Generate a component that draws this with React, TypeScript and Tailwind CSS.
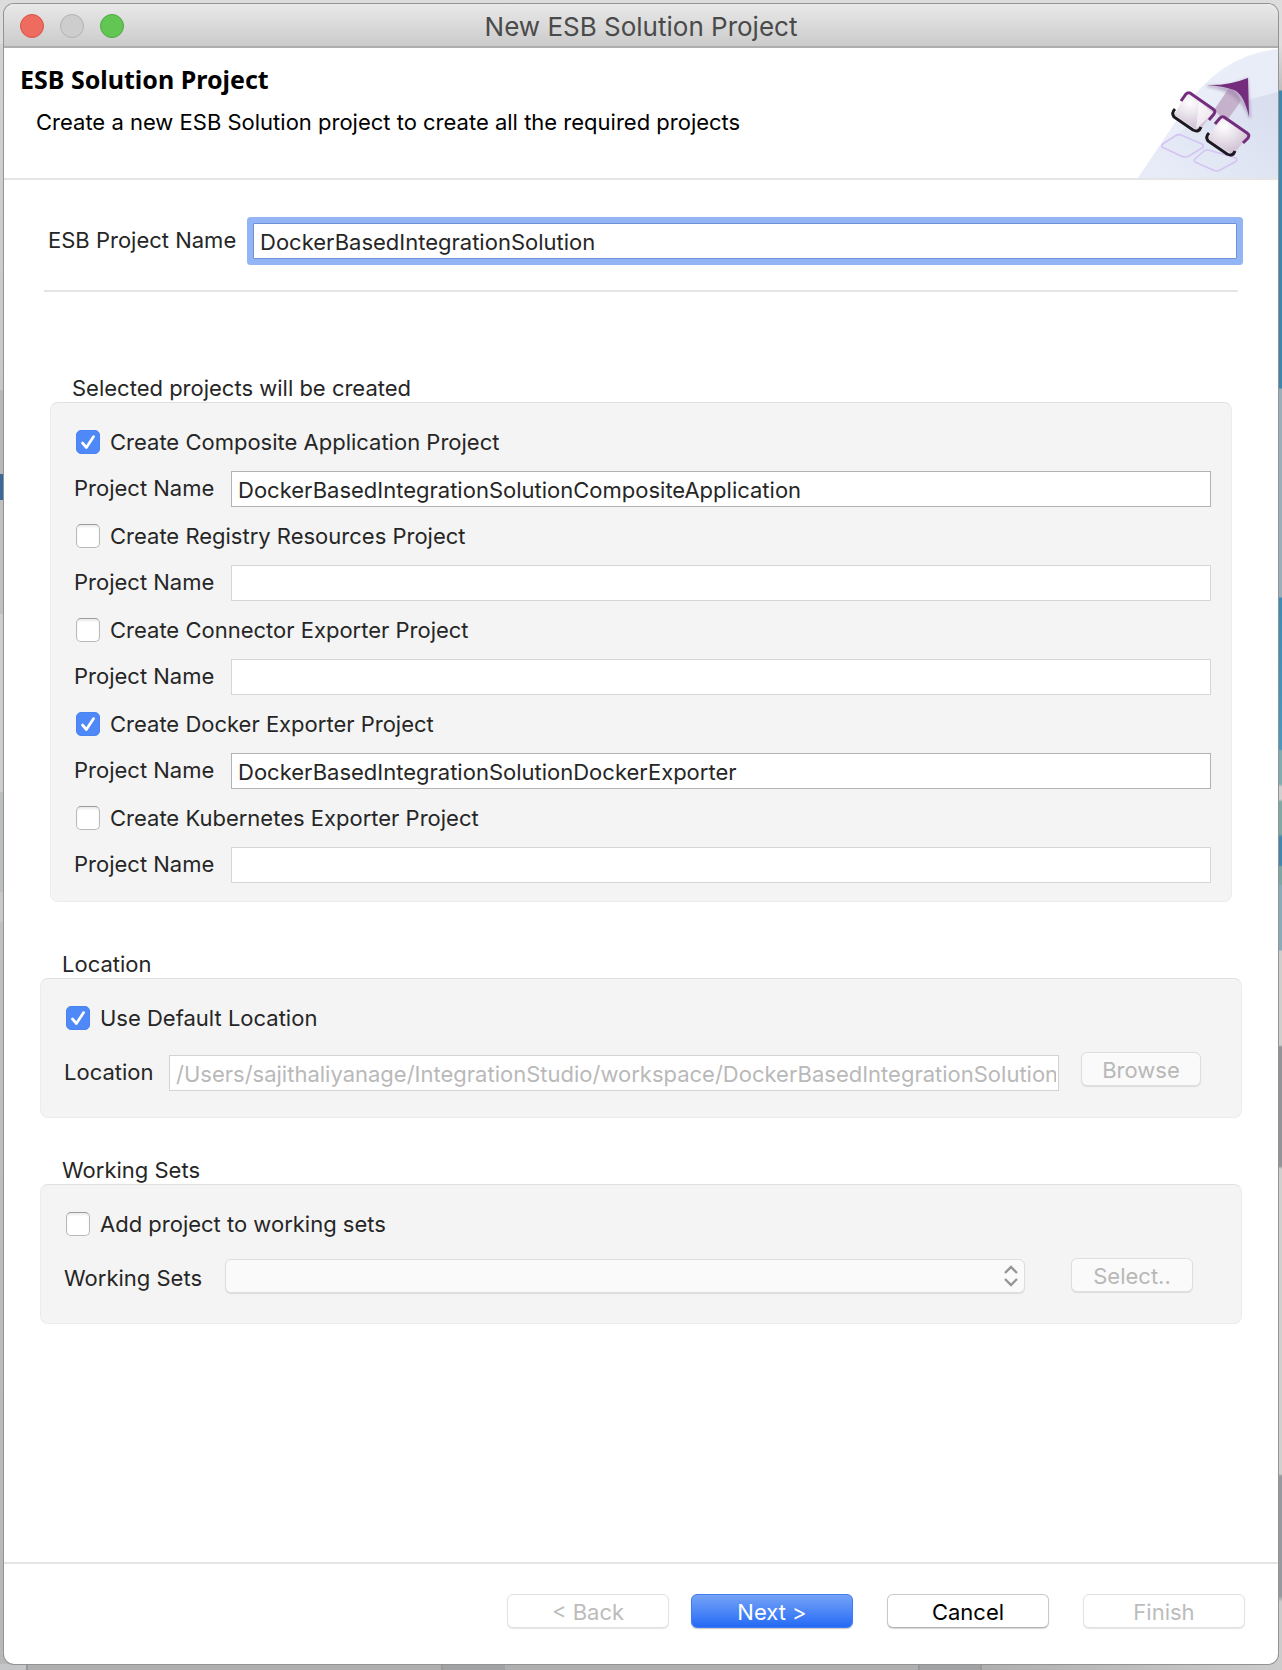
import { useState } from "react";
import type { ReactNode } from "react";

function Checkbox({ label, initial = false }: { label: string; initial?: boolean }) {
  const [checked, setChecked] = useState(initial);
  return (
    <label className="flex h-6 items-center gap-2.5">
      <span className="grid h-6 w-6 shrink-0">
        <input
          type="checkbox"
          checked={checked}
          onChange={(e) => setChecked(e.target.checked)}
          className="col-start-1 row-start-1 h-6 w-6 appearance-none rounded-[5px] border border-[#b9b9b9] border-t-[#9c9c9c] bg-white shadow-[inset_0_2px_2px_#ececec] checked:border-[#4a84f3] checked:bg-[#4e89f7] checked:shadow-none"
        />
        {checked && (
          <svg viewBox="0 0 24 24" className="pointer-events-none col-start-1 row-start-1 h-6 w-6" fill="none" stroke="white" strokeWidth="2.7" strokeLinecap="round" strokeLinejoin="round">
            <path d="M6.5 13 L10.4 17.5 L17.6 6.6" />
          </svg>
        )}
      </span>
      <span>{label}</span>
    </label>
  );
}

function ProjectRow({ id, title, value = "", checked = false }: { id: string; title: string; value?: string; checked?: boolean }) {
  return (
    <div className="flex flex-col gap-4">
      <div className="pl-0.5">
        <Checkbox label={title} initial={checked} />
      </div>
      <div className="flex h-[38px] items-center">
        <label htmlFor={id} className="w-[157px] shrink-0 pb-0.5">
          Project Name
        </label>
        <input
          id={id}
          type="text"
          defaultValue={value}
          disabled={!checked}
          className={
            checked
              ? "h-9 min-w-0 flex-1 border border-[#b3b3b3] bg-white px-1.5 pt-0.5 outline-none"
              : "h-9 min-w-0 flex-1 border border-[#d6d6d6] bg-white px-1.5 pt-0.5 outline-none"
          }
        />
      </div>
    </div>
  );
}

function Group({ title, children }: { title: string; children: ReactNode }) {
  return (
    <section className="flex flex-col">
      <h2 className="h-7 pl-[22px] leading-7">{title}</h2>
      <div className="rounded-lg border border-[#ececec] border-t-[#e0e0e0] bg-[#f4f4f4] pt-[27px] pr-5 pl-[23px]">{children}</div>
    </section>
  );
}

function WizardLogo() {
  return (
    <svg viewBox="0 0 142 130" className="h-[130px] w-[142px] shrink-0" aria-hidden="true">
      <defs>
        <linearGradient id="sweep" x1="0" y1="0" x2="1" y2="1">
          <stop offset="0" stopColor="#eef1fa" />
          <stop offset="1" stopColor="#e4e9f6" />
        </linearGradient>
        <linearGradient id="fold" x1="1" y1="0" x2="0.1" y2="0.8">
          <stop offset="0" stopColor="#d0d7e9" />
          <stop offset="1" stopColor="#e6ebf7" />
        </linearGradient>
        <radialGradient id="tile" cx="0.4" cy="0.25" r="0.8">
          <stop offset="0" stopColor="#ffffff" />
          <stop offset="1" stopColor="#c9b8cd" />
        </radialGradient>
        <filter id="soft" x="-20%" y="-20%" width="140%" height="140%">
          <feGaussianBlur stdDeviation="1.5" />
        </filter>
      </defs>
      <path d="M2 130 L46 64 Q84 6 142 1 L142 130 Z" fill="url(#sweep)" />
      <path d="M2 130 L22 100 Q70 60 142 44 L142 130 Z" fill="url(#fold)" opacity="0.7" />
      <g fill="none" stroke="#d4c4f3" strokeWidth="1.6" strokeLinejoin="round">
        <path d="M26 99 Q25 97 28 95 L39 88 Q42 86 45 87 L66 96 Q69 98 66 100 L53 108 Q49 110 45 108 Z" />
        <path d="M59 114 Q57 112 60 110 L68 103 Q71 101 76 103 L100 110 Q102 112 99 114 L84 122 Q81 124 77 122 Z" />
      </g>
      <path d="M78 62 L93 40 Q101 43 105 53 L90 74 Z" fill="#c5b1cb" />
      <path d="M71 38 Q95 40 111 31 L114 70 Q105 43 71 38 Z" fill="#9a80a8" stroke="#9a80a8" strokeWidth="2" opacity="0.55" filter="url(#soft)" />
      <path d="M71 37 Q92 38 112 30 L113 69 Q108 46 98 42 Q88 38 71 37 Z" fill="#742c7c" />
      <g>
        <path d="M51 45 L78 64 L63 83 L38 67 Z" fill="url(#tile)" />
        <path d="M63 54 L77 65 L60 81 Z" fill="white" opacity="0.6" />
        <path d="M45 53 L50 46 Q52 44 54 45 L77 61 Q80 63 78 66 L73 72" fill="none" stroke="#742c7c" strokeWidth="3" />
        <path d="M39 61 Q35 65 38 69 L57 82 Q63 85 65 79" fill="none" stroke="#1d1820" strokeWidth="3" />
      </g>
      <g>
        <path d="M85 69 L112 88 L97 107 L72 91 Z" fill="url(#tile)" />
        <path d="M79 76 L84 70 Q86 68 88 69 L111 85 Q114 87 112 90 L107 95" fill="none" stroke="#742c7c" strokeWidth="3" />
        <path d="M73 85 Q69 89 72 93 L91 106 Q97 109 99 103" fill="none" stroke="#1d1820" strokeWidth="3" />
      </g>
    </svg>
  );
}

const footerButton = "h-[34px] w-[162px] rounded-md border pt-0.5";
const disabledButton = "h-[34px] rounded-md border border-[#dedede] bg-[#fafafa] pt-0.5 text-[#b8b8b8] shadow-[0_1px_1px_#dcdcdc]";

function Backdrop() {
  return (
    <div aria-hidden="true" className="absolute inset-0 -z-10 flex flex-col overflow-hidden bg-[#afafaf]">
      <div className="flex flex-1 justify-between bg-linear-to-b from-[#dcdcdc] to-[#b8b8b8]">
        <div className="w-2 bg-[linear-gradient(to_bottom,#dcdcdc_0_44px,#d2d2d2_44px,#c8c8c8_390px,#b7b9b9_390px_474px,#3a689c_474px_500px,#bfc1c1_500px_614px,#cfcecc_614px_792px,#bcbfc0_792px_892px,#c9c9c8_892px_922px,#c0c0c0_922px,#b8b8b8)]" />
        <div className="w-2 bg-[linear-gradient(to_bottom,#dddddd_0_44px,#bdbdbd_90px,#3c87ad_91px_388px,#9aafb9_389px_597px,#3b8bb6_598px,#4a98bf_749px,#80adb0_751px_784px,#d0d0d0_787px_799px,#80a9a6_802px_834px,#4087b0_837px_865px,#7ba6a4_867px_884px,#8aacba_886px_950px,#cfcecc_951px_1045px,#929497_1047px_1166px,#d0d0ce_1169px_1474px,#949a9f_1476px_1596px,#cccccc_1602px)]" />
      </div>
      <div className="flex h-1.5">
        <div className="w-7 border-r-2 border-[#999999] bg-[#c4c6c8]" />
        <div className="flex-1 border-r-2 border-[#999999]" />
        <div className="w-[62px] bg-[#a0a2a4]" />
        <div className="flex-1 border-r-2 border-[#999999]" />
        <div className="w-[62px] border-r-2 border-[#999999] bg-[#a0a2a4]" />
        <div className="w-[300px] bg-linear-to-r to-[#cccccc]" />
      </div>
    </div>
  );
}

export default function App() {
  return (
    <div className="relative isolate flex min-h-screen flex-col px-1 pt-1 pb-1.5 font-['Inter',sans-serif] text-[22px] leading-7 text-[#262626]">
      <Backdrop />
      <main className="flex flex-1 flex-col overflow-hidden rounded-[10px] bg-white shadow-[0_0_0_1px_#939393]">
        <header className="grid h-11 grid-cols-[1fr_auto_1fr] items-center border-b-2 border-[#aeaeae] bg-linear-to-b from-[#e9e9e9] to-[#cbcbcb] px-4">
          <div className="flex gap-4 pt-0.5">
            <button aria-label="Close" className="h-6 w-6 rounded-full border border-[#dc5047] bg-[#ed6b5f]" />
            <button aria-label="Minimize" disabled className="h-6 w-6 rounded-full border border-[#b1b1b1] bg-[#cdcdcd]" />
            <button aria-label="Zoom" className="h-6 w-6 rounded-full border border-[#4ca93c] bg-[#62c655]" />
          </div>
          <h1 className="pt-1 text-[26px] text-[#4a4a4a]">New ESB Solution Project</h1>
        </header>

        <section className="flex justify-between border-b-2 border-[#e5e5e5] text-black">
          <div className="flex flex-col gap-[15px] pt-[17px] pl-4">
            <h2 className="font-['Noto_Sans',sans-serif] text-[25px] font-bold">ESB Solution Project</h2>
            <p className="pl-4">Create a new ESB Solution project to create all the required projects</p>
          </div>
          <WizardLogo />
        </section>

        <form className="flex flex-1 flex-col" onSubmit={(e) => e.preventDefault()}>
          <div className="mx-10 flex items-center border-b-2 border-[#e5e5e5] pt-[43px] pb-[31px]">
            <label htmlFor="esb-name" className="w-[209px] shrink-0 pb-0.5 pl-1">
              ESB Project Name
            </label>
            <input
              id="esb-name"
              type="text"
              defaultValue="DockerBasedIntegrationSolution"
              className="mr-px h-9 min-w-0 flex-1 rounded-[1px] border border-[#6f93d8] bg-white px-1.5 pt-0.5 shadow-[0_0_0_6px_#93b4f5] outline-none"
            />
          </div>

          <div className="mx-[46px] mt-[82px]">
            <Group title="Selected projects will be created">
              <div className="flex flex-col gap-4 pb-[17px]">
                <ProjectRow id="composite" title="Create Composite Application Project" value="DockerBasedIntegrationSolutionCompositeApplication" checked />
                <ProjectRow id="registry" title="Create Registry Resources Project" />
                <ProjectRow id="connector" title="Create Connector Exporter Project" />
                <ProjectRow id="docker" title="Create Docker Exporter Project" value="DockerBasedIntegrationSolutionDockerExporter" checked />
                <ProjectRow id="kubernetes" title="Create Kubernetes Exporter Project" />
              </div>
            </Group>
          </div>

          <div className="mx-9 mt-12 flex flex-col gap-[38px]">
            <Group title="Location">
              <div className="flex h-[111px] flex-col gap-[22px]">
                <div className="pl-0.5">
                  <Checkbox label="Use Default Location" initial />
                </div>
                <div className="flex items-start pr-5">
                  <label htmlFor="location" className="w-[105px] shrink-0 pt-1.5">
                    Location
                  </label>
                  <input
                    id="location"
                    type="text"
                    disabled
                    defaultValue="/Users/sajithaliyanage/IntegrationStudio/workspace/DockerBasedIntegrationSolution"
                    className="mt-[3px] h-9 min-w-0 flex-1 border border-[#d3d3d3] bg-white pt-0.5 pr-0.5 pl-1.5 text-[#b9b9b9]"
                  />
                  <button type="button" disabled className={`${disabledButton} ml-[22px] w-[120px]`}>
                    Browse
                  </button>
                </div>
              </div>
            </Group>

            <Group title="Working Sets">
              <div className="flex h-[111px] flex-col gap-[22px]">
                <div className="pl-0.5">
                  <Checkbox label="Add project to working sets" />
                </div>
                <div className="flex items-start pr-7">
                  <label htmlFor="sets" className="w-[161px] shrink-0 pt-1.5">
                    Working Sets
                  </label>
                  <div className="mt-px grid min-w-0 flex-1">
                    <select id="sets" disabled className="col-start-1 row-start-1 h-[34px] w-full appearance-none rounded-md border border-[#dedede] bg-[#fafafa] shadow-[0_1px_1px_#dcdcdc]" />
                    <svg viewBox="0 0 14 22" className="pointer-events-none col-start-1 row-start-1 mr-[7px] h-[22px] w-3.5 self-center justify-self-end" fill="none" stroke="#969696" strokeWidth="2.4">
                      <path d="M1 8 L7 2 L13 8 M1 14 L7 20 L13 14" />
                    </svg>
                  </div>
                  <button type="button" disabled className={`${disabledButton} ml-[46px] w-[122px]`}>
                    Select..
                  </button>
                </div>
              </div>
            </Group>
          </div>

          <footer className="mt-auto flex justify-end border-t-2 border-[#e5e5e5] pt-[30px] pr-[33px] pb-9">
            <button type="button" disabled className={`${footerButton} border-[#e2e2e2] bg-white text-[#bcbcbc] shadow-[0_1px_1px_#e5e5e5]`}>
              &lt; Back
            </button>
            <button type="submit" className={`${footerButton} ml-[22px] border-[#3f7df0] bg-linear-to-b from-[#75a2f5] to-[#2369f6] text-white shadow-[0_1px_1px_#c5c5c5]`}>
              Next &gt;
            </button>
            <button type="button" className={`${footerButton} ml-[34px] border-[#c9c9c9] border-b-[#b5b5b5] bg-white text-black shadow-[0_1px_1px_#d5d5d5]`}>
              Cancel
            </button>
            <button type="button" disabled className={`${footerButton} ml-[34px] border-[#e2e2e2] bg-white text-[#bcbcbc] shadow-[0_1px_1px_#e5e5e5]`}>
              Finish
            </button>
          </footer>
        </form>
      </main>
    </div>
  );
}
